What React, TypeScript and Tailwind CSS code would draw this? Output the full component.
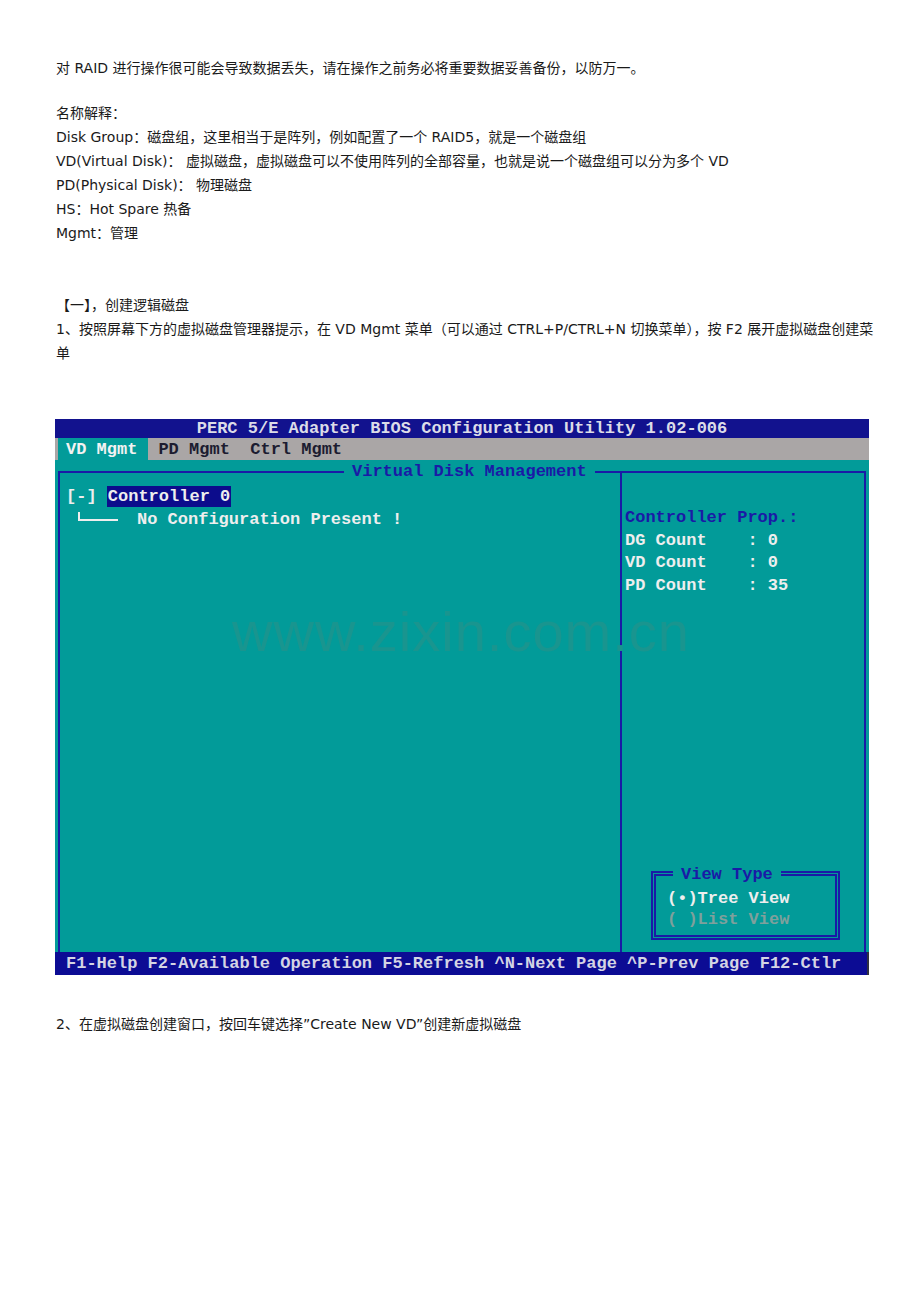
import React from 'react';

const mono = { fontFamily: '"Liberation Mono", "DejaVu Sans Mono", monospace' };

const BiosScreen: React.FC = () => {
  return (
    <div
      className="w-[814px] h-[556px] flex flex-col bg-[#029b99] font-bold text-[17px] leading-none whitespace-pre"
      style={mono}
    >
      {/* Title */}
      <div className="h-[19px] bg-[#12128e] text-[#dcdce8] flex items-center justify-center">
        PERC 5/E Adapter BIOS Configuration Utility 1.02-006
      </div>

      {/* Menu */}
      <div className="h-[22px] bg-[#aaa6a6] flex items-stretch pl-[3px] text-[#1c1c30]">
        <span className="bg-[#029b99] text-[#f2f2f2] pl-[8px] pr-[11px] flex items-center">VD Mgmt</span>
        <span className="pl-[10px] flex items-center">PD Mgmt  Ctrl Mgmt</span>
      </div>

      {/* Main */}
      <div className="flex-1 relative px-[3px] pt-[11px]">
        <div className="h-full border-l-2 border-t-2 border-r-2 border-[#1a1aa6] flex relative">
          <span className="absolute top-[-10px] left-[284px] bg-[#029b99] px-[8px] text-[#1a1aa6]">Virtual Disk Management</span>

          {/* Left pane */}
          <div className="w-[562px] border-r-2 border-[#1a1aa6] pl-[6px] pt-[13px] text-[#eeeeee] flex flex-col gap-[4px]">
            <div className="flex items-center">
              <span>[-] </span>
              <span className="bg-[#0c0c8c] px-[1px] py-[2px]">Controller 0</span>
            </div>
            <div className="flex items-center">
              <span className="w-[12px]" />
              <span className="inline-block w-[40px] h-[9px] border-l-2 border-b-2 border-[#eeeeee] mb-[6px]" />
              <span className="w-[19px]" />
              <span>No Configuration Present !</span>
            </div>
          </div>

          {/* Right pane */}
          <div className="flex-1 flex flex-col pl-[3px] pt-[36px]">
            <div className="flex flex-col gap-[5.5px] text-[#eeeeee]">
              <div className="text-[#1a1aa6]">Controller Prop.:</div>
              <div>DG Count    : 0</div>
              <div>VD Count    : 0</div>
              <div>PD Count    : 35</div>
            </div>
            <div className="flex-1" />
            <div className="ml-[26px] mb-[12px] w-[189px] h-[69px] border-[5px] border-double border-[#1a1aa6] relative pl-[11px] pt-[14px] flex flex-col gap-[4px]">
              <span className="absolute top-[-10px] left-[17px] bg-[#029b99] px-[8px] text-[#1a1aa6]">View Type</span>
              <span className="text-[#eeeeee]">(•)Tree View</span>
              <span className="text-[#7fa09c]">( )List View</span>
            </div>
          </div>
        </div>
        <div
          className="absolute left-[177px] top-[144px] text-[56px] font-normal text-[#19958f] tracking-[1px] pointer-events-none"
          style={{ fontFamily: '"Liberation Sans", Arial, sans-serif' }}
        >
          www.zixin.com.cn
        </div>
      </div>

      {/* Footer */}
      <div className="h-[23px] bg-[#0c0c94] text-[#d4d4e4] flex items-center pl-[11px] border-r-2 border-[#303040]">
        F1-Help F2-Available Operation F5-Refresh ^N-Next Page ^P-Prev Page F12-Ctlr
      </div>
    </div>
  );
};

export default function App() {
  return (
    <div
      className="w-[920px] min-h-[1302px] bg-white text-[#1a1a1a] text-[14px] leading-[24px] pl-[56px] pt-[56px]"
      style={{ fontFamily: '"DejaVu Sans", "Noto Sans CJK SC", sans-serif' }}
    >
      <p className="whitespace-nowrap">对 RAID 进行操作很可能会导致数据丢失，请在操作之前务必将重要数据妥善备份，以防万一。</p>

      <div className="mt-[21px] whitespace-nowrap">
        <p>名称解释：</p>
        <p>Disk Group：磁盘组，这里相当于是阵列，例如配置了一个 RAID5，就是一个磁盘组</p>
        <p>VD(Virtual Disk)： 虚拟磁盘，虚拟磁盘可以不使用阵列的全部容量，也就是说一个磁盘组可以分为多个 VD</p>
        <p>PD(Physical Disk)： 物理磁盘</p>
        <p>HS：Hot Spare 热备</p>
        <p>Mgmt：管理</p>
      </div>

      <div className="mt-[48px] whitespace-nowrap">
        <p>【一】，创建逻辑磁盘</p>
        <p>1、按照屏幕下方的虚拟磁盘管理器提示，在 VD Mgmt 菜单（可以通过 CTRL+P/CTRL+N 切换菜单），按 F2 展开虚拟磁盘创建菜</p>
        <p>单</p>
      </div>

      <div className="mt-[54px] -ml-[1px]">
        <BiosScreen />
      </div>

      <p className="mt-[37px] whitespace-nowrap">2、在虚拟磁盘创建窗口，按回车键选择”Create New VD”创建新虚拟磁盘</p>
    </div>
  );
}
